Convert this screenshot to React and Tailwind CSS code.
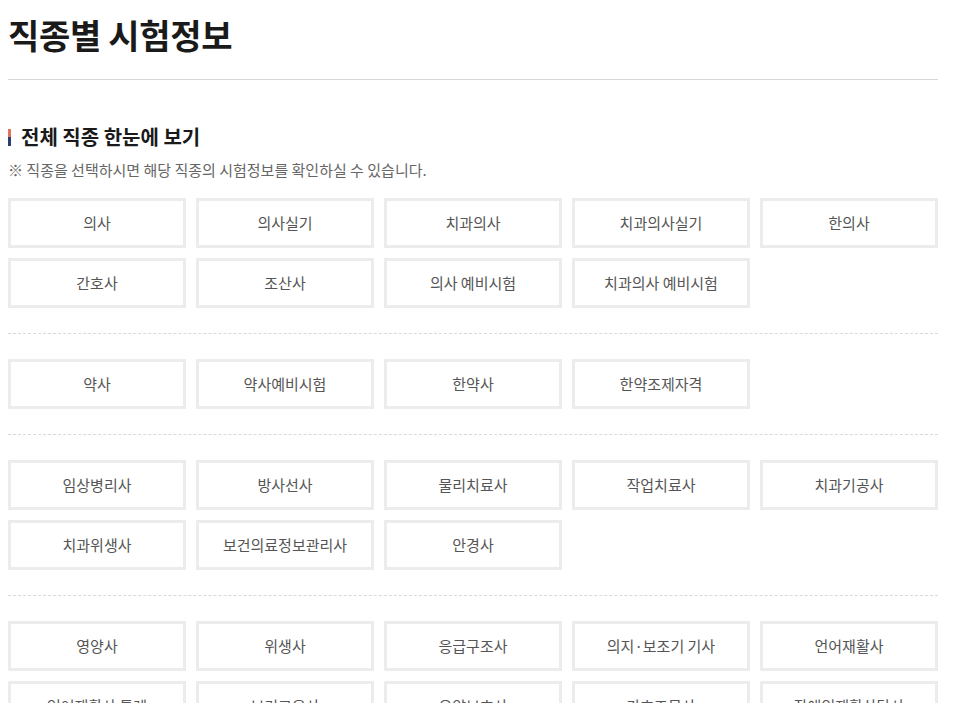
const groups = [
  ["의사", "의사실기", "치과의사", "치과의사실기", "한의사", "간호사", "조산사", "의사 예비시험", "치과의사 예비시험"],
  ["약사", "약사예비시험", "한약사", "한약조제자격"],
  ["임상병리사", "방사선사", "물리치료사", "작업치료사", "치과기공사", "치과위생사", "보건의료정보관리사", "안경사"],
  ["영양사", "위생사", "응급구조사", "의지·보조기 기사", "언어재활사", "언어재활사 특례", "보건교육사", "요양보호사", "간호조무사", "장애인재활상담사"],
];

export default function App() {
  return (
    <div
      className="w-[930px] ml-2 bg-white text-[#222]"
      style={{ fontFamily: '"Noto Sans CJK KR", "Noto Sans", sans-serif' }}
    >
      {/* page title */}
      <h1 className="pt-[11px] pb-[20px] text-[34px] font-bold leading-[48px] tracking-[-0.3px] text-[#1a1a1a] border-b border-[#d6d6d6]">
        직종별 시험정보
      </h1>

      <div className="mt-[44px] flex items-center gap-[10px]">
        <span className="flex flex-col w-[3px] h-[17px]">
          <span className="flex-1 bg-[#e2735a]" />
          <span className="flex-1 bg-[#2c3d70]" />
        </span>
        <h2 className="text-[20px] font-bold leading-[26px] text-[#1a1a1a]">전체 직종 한눈에 보기</h2>
      </div>
      <p className="mt-[10px] text-[15px] leading-[20px] text-[#666]">
        ※ 직종을 선택하시면 해당 직종의 시험정보를 확인하실 수 있습니다.
      </p>

      {groups.map((items, gi) => (
        <div
          key={gi}
          className={
            gi === 0
              ? "pt-[18px] pb-[25px] border-b border-dashed border-[#d9d9d9]"
              : "pt-[25px] pb-[25px] border-b border-dashed border-[#d9d9d9]"
          }
        >
          <div className="grid grid-cols-5 gap-[10px]">
            {items.map((name) => (
              <button
                key={name}
                className="h-[50px] border-[3px] border-[#ececec] bg-white text-[15px] text-[#555] flex items-center justify-center"
              >
                {name}
              </button>
            ))}
          </div>
        </div>
      ))}
    </div>
  );
}
